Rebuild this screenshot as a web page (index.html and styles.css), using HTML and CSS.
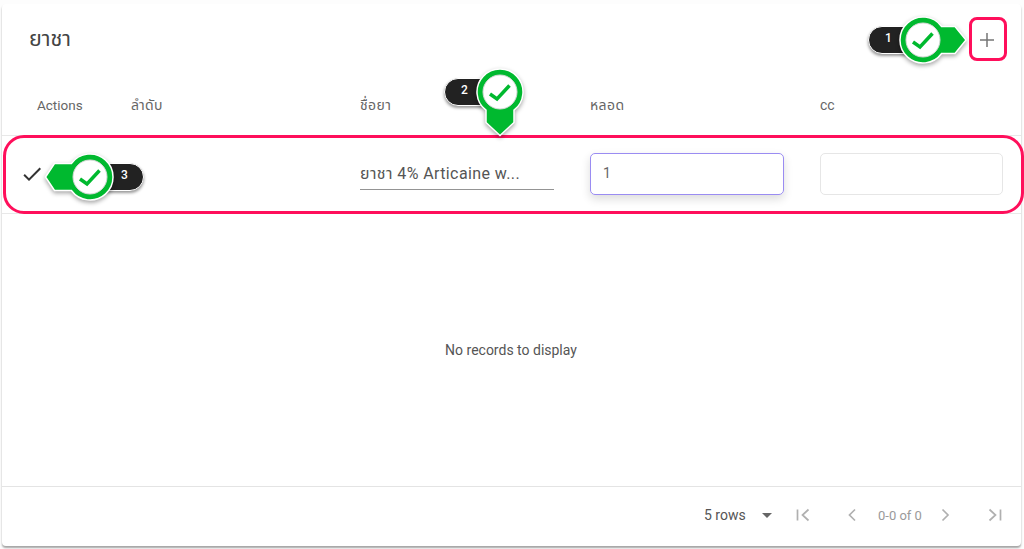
FILE: index.html
```html
<!DOCTYPE html>
<html lang="en">
  <head>
    <meta charset="UTF-8" />
    <meta name="viewport" content="width=device-width, initial-scale=1.0" />
    <title>ยาชา</title>
    <link rel="stylesheet" href="styles.css">
  </head>
  <body>
    <div class="card">
      <header class="toolbar">
        <h1>ยาชา</h1>
        <button class="add-btn" aria-label="add">
          <svg width="24" height="24" viewBox="0 0 24 24"><path d="M19 12.750h-6.250V19h-1.500v-6.250H5v-1.500h6.250V5h1.500v6.250H19z" /></svg>
        </button>
      </header>

      <div class="row head-row">
        <div class="cell first">Actions</div>
        <div class="cell thai">ลำดับ</div>
        <div class="cell thai">ชื่อยา</div>
        <div class="cell thai">หลอด</div>
        <div class="cell">cc</div>
      </div>

      <div class="row edit-row">
        <div class="cell check-cell">
          <svg width="24" height="24" viewBox="0 0 24 24"><path d="M9 16.170 4.830 12l-1.420 1.410L9 19 21 7l-1.410-1.410z" /></svg>
        </div>
        <div class="cell"></div>
        <div class="cell"><div class="select-box">ยาชา 4% Articaine w...</div></div>
        <div class="cell"><div class="text-box focused">1</div></div>
        <div class="cell"><div class="text-box short"></div></div>
      </div>

      <div class="empty">No records to display</div>

      <footer class="pager">
        <div class="rows-select">5 rows <span class="caret"></span></div>
        <svg class="page-icon first-page" width="24" height="24" viewBox="0 0 24 24"><path d="M6.500 6.500v11M17.500 6.500 11.500 12l6 5.500" /></svg>
        <svg class="page-icon prev-page" width="24" height="24" viewBox="0 0 24 24"><path d="M15 6.500 9.500 12l5.500 5.500" /></svg>
        <span class="page-count">0-0 of 0</span>
        <svg class="page-icon next-page" width="24" height="24" viewBox="0 0 24 24"><path d="M9.500 6.500 15 12l-5.500 5.500" /></svg>
        <svg class="page-icon last-page" width="24" height="24" viewBox="0 0 24 24"><path d="M6.500 6.500 12.500 12l-6 5.500M17.500 6.500v11" /></svg>
      </footer>
    </div>

    <!-- annotations over the screenshot -->
    <div class="frame frame-add"></div>
    <div class="frame frame-row"></div>

    <div class="pill pill-1">1</div>
    <div class="pill pill-2">2</div>
    <div class="pill pill-3">3</div>

    <svg class="marker marker-1" width="76" height="52" viewBox="0 0 76 52">
      <path class="marker-edge" d="M42.600 12.500H56L67 26 56 39.500H42.600A23 23 0 1 1 42.600 12.500z" />
      <circle class="marker-ring" cx="24" cy="26" r="17" />
      <path class="marker-tick" d="M14 28 21 33 33.500 19.500" />
    </svg>
    <svg class="marker marker-2" width="52" height="72" viewBox="0 0 52 72">
      <path class="marker-edge" d="M40 43.200V55.500L26 68.500 12 55.500V43.200A23 23 0 1 1 40 43.200z" />
      <circle class="marker-ring" cx="26" cy="25" r="17" />
      <path class="marker-tick" d="M16 27 23 32 35.500 18.500" />
    </svg>
    <svg class="marker marker-3" width="76" height="52" viewBox="0 0 76 52">
      <path class="marker-edge" d="M33.400 12.500H16.500L7.500 26l9 13.500H33.400A23 23 0 1 0 33.400 12.500z" />
      <circle class="marker-ring" cx="52" cy="26" r="17" />
      <path class="marker-tick" d="M42 28 49 33 61.500 19.500" />
    </svg>
  </body>
</html>
```

FILE: styles.css
```css
* {
  box-sizing: border-box;
  margin: 0;
  padding: 0;
}
html,
body {
  height: 549px;
  overflow: hidden;
}
body {
  position: relative;
  background-color: #fdfdfd;
  color: rgba(0, 0, 0, 0.87);
  font-family: Roboto, "Noto Sans", "Noto Sans Thai", sans-serif;
}
.card {
  display: flex;
  flex-direction: column;
  width: 1019px;
  height: 542px;
  margin: 4px 0 0 2px;
  background-color: #fff;
  border-radius: 4px;
  box-shadow: 0 2px 2px rgba(0, 0, 0, 0.35);
}
.toolbar {
  display: flex;
  justify-content: space-between;
  align-items: center;
  height: 69px;
  padding: 2px 22px 0 27px;
}
.toolbar h1 {
  font-size: 21.500px;
  font-weight: 400;
  color: #444;
}
.add-btn {
  display: flex;
  border: none;
  background: none;
  fill: #757575;
}
.row {
  display: grid;
  grid-template-columns: 113px 229px 230px 230px 217px;
  border-bottom: 1px solid #e8e8e8;
}
.cell {
  padding: 0 0 0 16px;
  display: flex;
  align-items: center;
}
.head-row {
  height: 63px;
  font-size: 14px;
  color: #666;
}
.head-row .cell {
  padding-top: 2px;
}
.head-row .first {
  padding-left: 35px;
  font-size: 13.500px;
}
.thai {
  letter-spacing: 0.4px;
}
.edit-row {
  height: 78px;
  padding-bottom: 2px;
}
.check-cell {
  padding-left: 18px;
  fill: #333;
}
.select-box {
  width: 194px;
  height: 32px;
  padding-top: 4px;
  border-bottom: 1px solid #949494;
  font-size: 16px;
  letter-spacing: 0.4px;
  color: #555;
  white-space: nowrap;
}
.text-box {
  width: 194px;
  height: 42px;
  padding: 11px 12px;
  border: 1px solid #e6e6e6;
  border-radius: 5px;
  font-size: 14px;
  color: #666;
}
.text-box.short {
  width: 183px;
}
.text-box.focused {
  border-color: #9a8cf2;
  box-shadow: 0 4px 10px rgba(0, 0, 0, 0.14);
}
.empty {
  display: flex;
  flex: 1;
  justify-content: center;
  align-items: center;
  padding-right: 1px;
  font-size: 14px;
  color: #555;
}
.pager {
  display: flex;
  align-items: center;
  height: 60px;
  padding: 0 0 3px 702px;
  border-top: 1px solid #e4e4e4;
}
.rows-select {
  display: flex;
  align-items: center;
  width: 82px;
  font-size: 14px;
  color: #555;
}
.caret {
  margin-left: 16px;
  border-left: 5px solid transparent;
  border-right: 5px solid transparent;
  border-top: 5px solid #666;
}
.page-icon {
  fill: none;
  stroke: #b0b0b0;
  stroke-width: 1.700;
}
.first-page {
  margin-left: 5px;
}
.prev-page {
  margin-left: 25px;
}
.page-count {
  margin: 0 11px 0 14px;
  font-size: 13px;
  color: #9a9a9a;
}
.last-page {
  margin-left: 26px;
}
.frame {
  position: absolute;
  border: 3px solid #ff0f5b;
}
.frame-add {
  left: 969px;
  top: 17px;
  width: 38px;
  height: 44px;
  border-radius: 8px;
}
.frame-row {
  left: 3px;
  top: 135px;
  width: 1021px;
  height: 79px;
  border-radius: 21px;
}
.pill {
  position: absolute;
  width: 62px;
  height: 28px;
  padding: 4px 0 0 16px;
  border: 1px solid #fff;
  border-radius: 14px;
  background-color: #222;
  box-shadow: 0 2px 3px rgba(0, 0, 0, 0.4);
  color: #fff;
  font-size: 12px;
  font-weight: 500;
}
.pill-1 {
  left: 868px;
  top: 26px;
}
.pill-2 {
  left: 444px;
  top: 78px;
}
.pill-3 {
  left: 82px;
  top: 163px;
  padding-left: 38px;
}
.marker {
  position: absolute;
  filter: drop-shadow(0 2px 2px rgba(0, 0, 0, 0.35));
}
.marker-1 {
  left: 899px;
  top: 14px;
}
.marker-2 {
  left: 474px;
  top: 67px;
}
.marker-3 {
  left: 38px;
  top: 151px;
}
.marker-edge {
  fill: #00b92f;
  stroke: #fff;
  stroke-width: 1.500;
}
.marker-ring {
  fill: #fff;
  stroke: #d8d8d8;
  stroke-width: 1;
}
.marker-tick {
  fill: none;
  stroke: #00b92f;
  stroke-width: 3.500;
}
```
